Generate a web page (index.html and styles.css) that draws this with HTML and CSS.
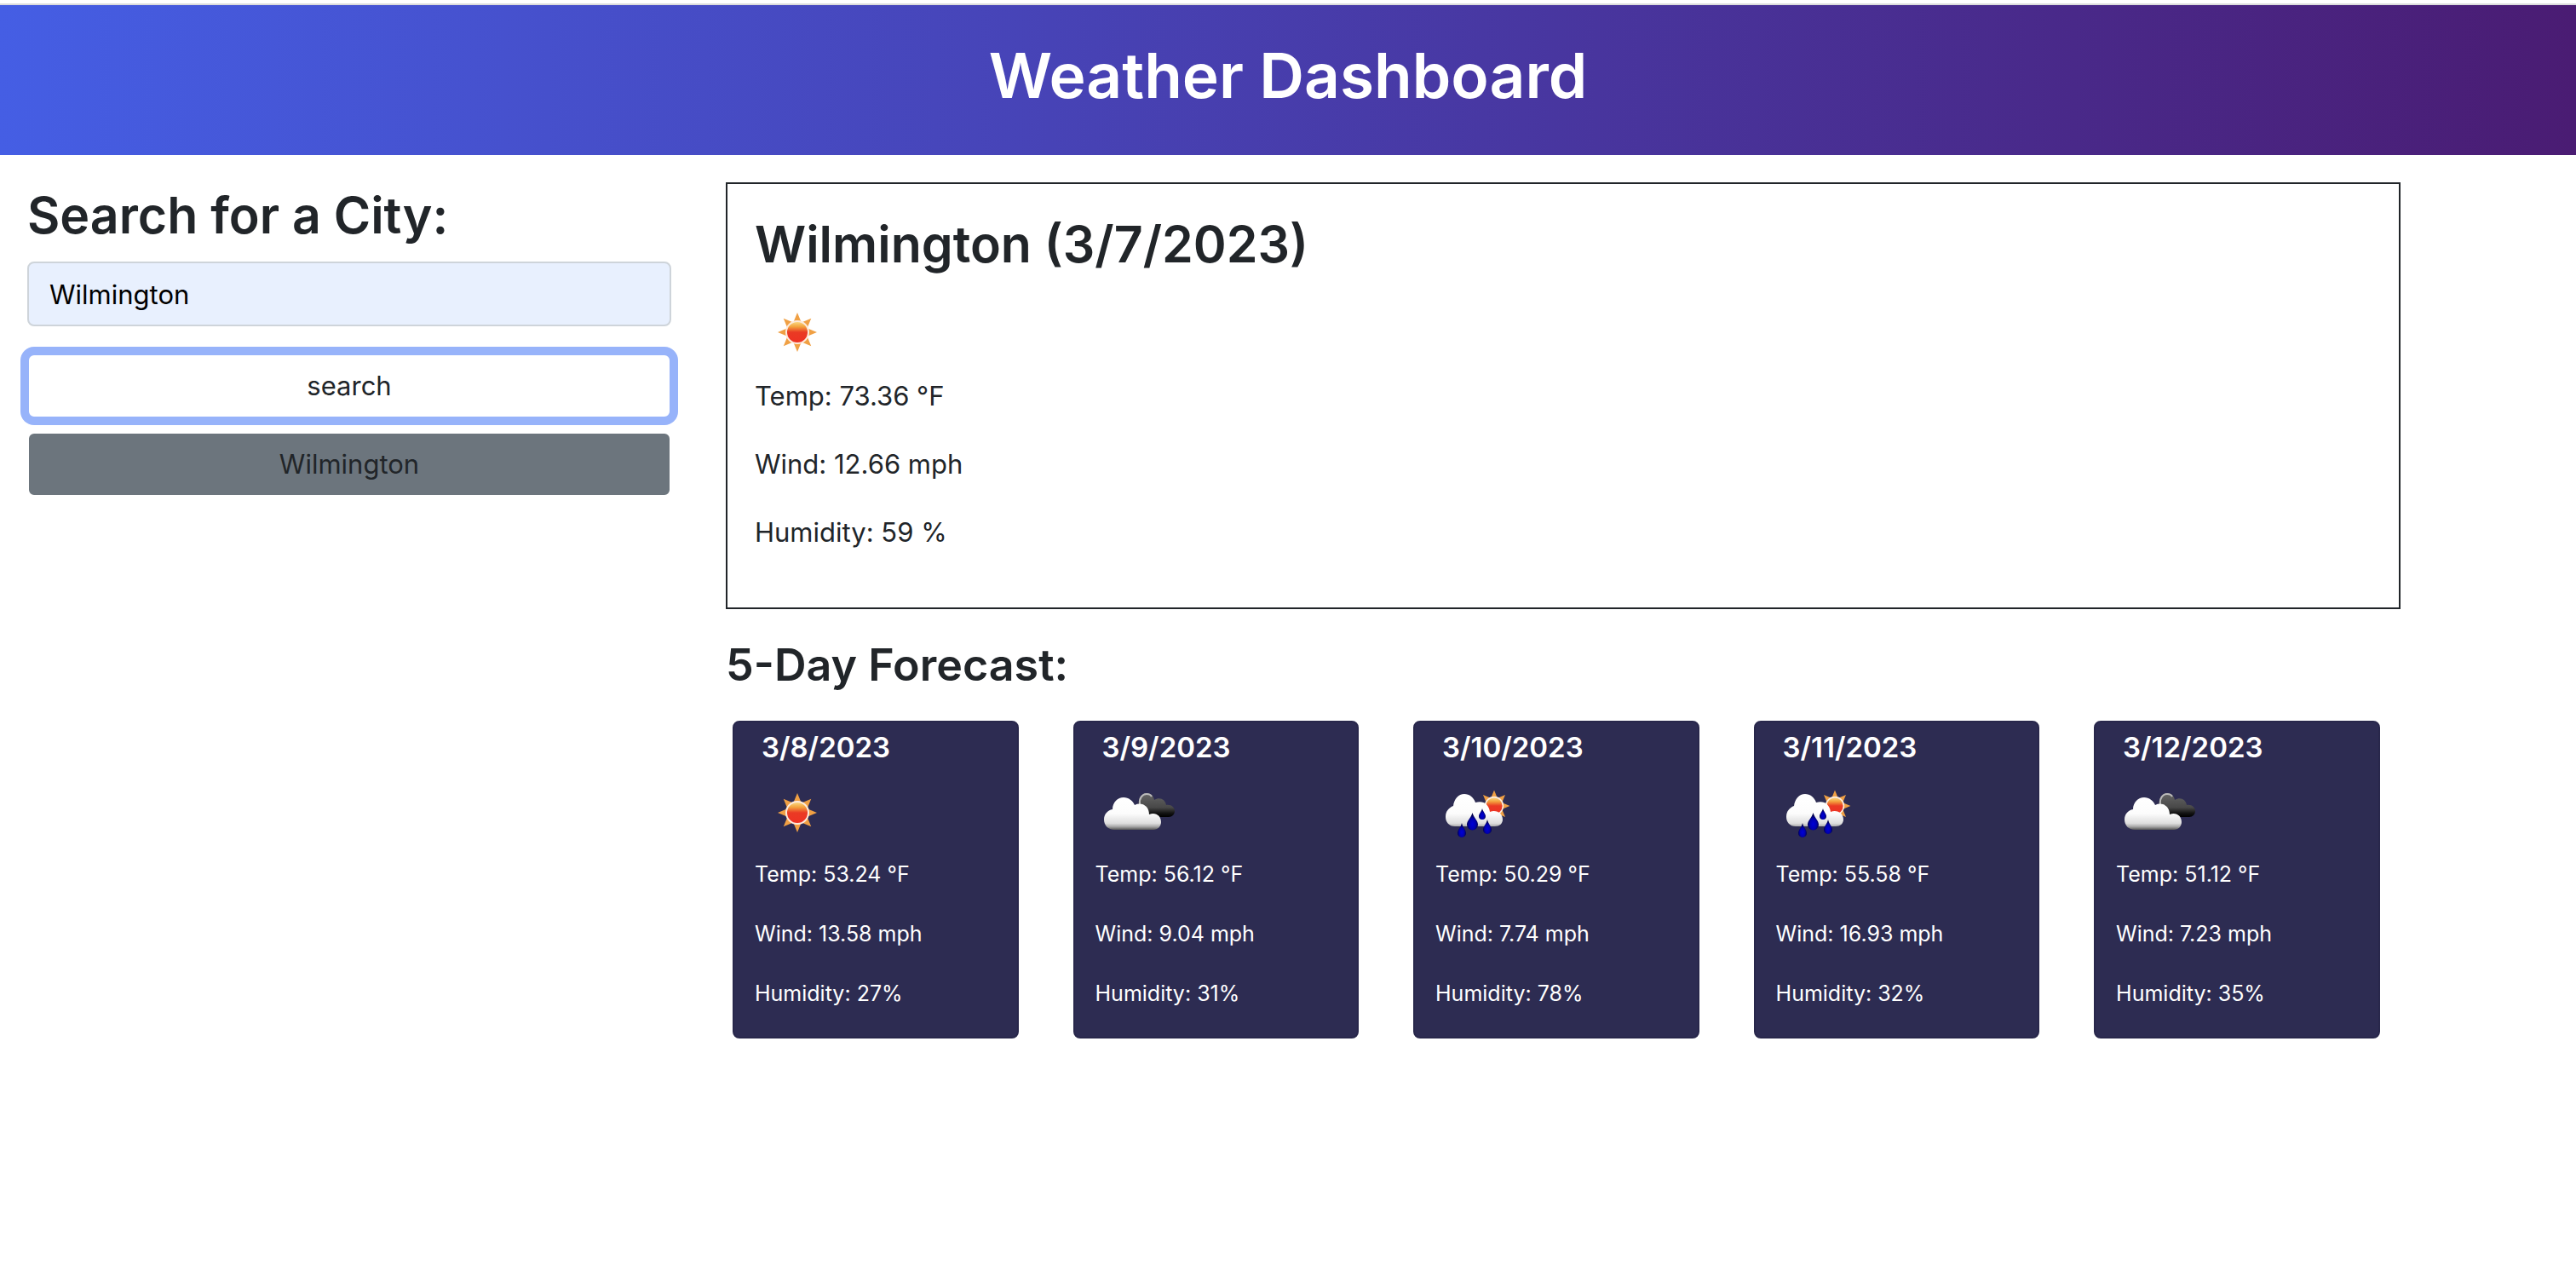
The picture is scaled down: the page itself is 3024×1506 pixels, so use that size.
FILE: index.html
```
<!DOCTYPE html>
<html lang="en">
<head>
<meta charset="utf-8">
<meta name="viewport" content="width=device-width, initial-scale=1">
<title>Weather Dashboard</title>
<link rel="stylesheet" href="styles.css">
</head>
<body>
<svg class="sprite" width="0" height="0" aria-hidden="true">
  <defs>
    <linearGradient id="sun-fill" x1="0" y1="0" x2="0" y2="1">
      <stop offset="0" stop-color="#fbe08a"/>
      <stop offset=".25" stop-color="#f3a23e"/>
      <stop offset=".5" stop-color="#ea3a24"/>
      <stop offset="1" stop-color="#ee3123"/>
    </linearGradient>
    <linearGradient id="cloud-fill" gradientUnits="userSpaceOnUse" x1="0" y1="32" x2="0" y2="70">
      <stop offset="0" stop-color="#fff"/>
      <stop offset=".5" stop-color="#fcfcfc"/>
      <stop offset=".8" stop-color="#dedede"/>
      <stop offset=".9" stop-color="#aaa"/>
      <stop offset="1" stop-color="#555"/>
    </linearGradient>
    <linearGradient id="dark-fill" gradientUnits="userSpaceOnUse" x1="0" y1="27" x2="0" y2="55">
      <stop offset="0" stop-color="#666"/>
      <stop offset=".6" stop-color="#484848"/>
      <stop offset=".85" stop-color="#111"/>
      <stop offset="1" stop-color="#000"/>
    </linearGradient>
    <radialGradient id="drop-fill" cx=".5" cy=".65" r=".5">
      <stop offset="0" stop-color="#0000d8"/>
      <stop offset=".6" stop-color="#0000b0"/>
      <stop offset="1" stop-color="#00004c"/>
    </radialGradient>
    <symbol id="sun" viewBox="0 0 100 100">
      <g fill="#f0a044">
        <path id="ray" d="M50 27 55 39 45 39Z"/>
        <use href="#ray" transform="rotate(45 50 50)"/>
        <use href="#ray" transform="rotate(90 50 50)"/>
        <use href="#ray" transform="rotate(135 50 50)"/>
        <use href="#ray" transform="rotate(180 50 50)"/>
        <use href="#ray" transform="rotate(225 50 50)"/>
        <use href="#ray" transform="rotate(270 50 50)"/>
        <use href="#ray" transform="rotate(315 50 50)"/>
      </g>
      <circle cx="50" cy="50" r="13" fill="url(#sun-fill)" stroke="#fdeadb" stroke-width="2"/>
    </symbol>
    <symbol id="clouds" viewBox="0 0 100 100">
      <path d="M51 45C49 35 53 27 60 27c5 0 8 3 9 8 6-4 13-1 14 6 6-1 10 3 10 7s-3 7-7 7H66Z" fill="url(#dark-fill)"/>
      <path d="M52 40C51 33 55 28 60 28c3 0 5 1 6 3" fill="none" stroke="#bbb" stroke-width="2"/>
      <path d="M22 70c-7 0-12-5-12-12 0-6 4-11 10-12 0-8 6-14 13-14 6 0 11 4 13 9 8-4 17 1 17 11 8-3 14 2 14 9 0 5-4 9-9 9Z" fill="url(#cloud-fill)"/>
    </symbol>
    <symbol id="rain" viewBox="0 0 100 100">
      <use href="#sun" x="29" y="2" width="80" height="80"/>
      <path d="M23 66c-7 0-11-5-11-11 0-7 4-11 9-13 1-8 6-14 13-14 6 0 11 4 13 10 9-3 16 2 17 11 8-3 15 2 15 9 0 5-4 8-9 8Z" fill="url(#cloud-fill)"/>
      <g fill="url(#drop-fill)">
        <path d="M43.500 50C45 56 50 59 50 64a6.500 6.500 0 0 1-13 0C37 59 42 56 43.500 50Z"/>
        <path d="M55 45C56 49 59 51 59 54a4 4 0 0 1-8 0C51 51 54 49 55 45Z"/>
        <path d="M31 62C32 67 36 70 36 74a5 5 0 0 1-10 0C26 70 30 67 31 62Z"/>
        <path d="M61 58C62 63 66 66 66 70a5 5 0 0 1-10 0C56 66 60 63 61 58Z"/>
      </g>
    </symbol>
  </defs>
</svg>

<header class="header">
  <h1 class="header-title">Weather Dashboard</h1>
</header>

<div class="layout">
  <aside class="sidebar">
    <form class="search">
      <h2><label for="city">Search for a City:</label></h2>
      <input class="search-input" id="city" type="text" value="Wilmington">
      <button class="btn btn-search" type="button">search</button>
    </form>
    <button class="btn btn-history" type="button">Wilmington</button>
  </aside>

  <main class="content">
    <section class="current">
      <h2>Wilmington (3/7/2023)</h2>
      <svg class="icon" role="img" aria-label="Clear sky"><use href="#sun"/></svg>
      <p>Temp: 73.36 °F</p>
      <p>Wind: 12.66 mph</p>
      <p>Humidity: 59 %</p>
    </section>

    <h3 class="forecast-title">5-Day Forecast:</h3>
    <section class="forecast">
      <article class="card">
        <h4>3/8/2023</h4>
        <svg class="icon" role="img" aria-label="Clear sky"><use href="#sun"/></svg>
        <p>Temp: 53.24 °F</p>
        <p>Wind: 13.58 mph</p>
        <p>Humidity: 27%</p>
      </article>
      <article class="card">
        <h4>3/9/2023</h4>
        <svg class="icon" role="img" aria-label="Broken clouds"><use href="#clouds"/></svg>
        <p>Temp: 56.12 °F</p>
        <p>Wind: 9.04 mph</p>
        <p>Humidity: 31%</p>
      </article>
      <article class="card">
        <h4>3/10/2023</h4>
        <svg class="icon" role="img" aria-label="Rain"><use href="#rain"/></svg>
        <p>Temp: 50.29 °F</p>
        <p>Wind: 7.74 mph</p>
        <p>Humidity: 78%</p>
      </article>
      <article class="card">
        <h4>3/11/2023</h4>
        <svg class="icon" role="img" aria-label="Rain"><use href="#rain"/></svg>
        <p>Temp: 55.58 °F</p>
        <p>Wind: 16.93 mph</p>
        <p>Humidity: 32%</p>
      </article>
      <article class="card">
        <h4>3/12/2023</h4>
        <svg class="icon" role="img" aria-label="Broken clouds"><use href="#clouds"/></svg>
        <p>Temp: 51.12 °F</p>
        <p>Wind: 7.23 mph</p>
        <p>Humidity: 35%</p>
      </article>
    </section>
  </main>
</div>
</body>
</html>
```
FILE: styles.css
```
*, *::before, *::after { box-sizing: border-box; }

body {
  margin: 0;
  padding-top: 4px;
  background: #fff;
  color: #212529;
  font-family: Inter, "Liberation Sans", sans-serif;
  font-size: 31px;
  line-height: 48px;
}

h1, h2, h3, h4, p { margin: 0; }

h1, h2, h3, h4 { font-weight: 600; }

h2 {
  font-size: 59px;
  line-height: 78px;
}

.sprite { position: absolute; }

.header {
  padding: 32px 32px 42px;
  border-top: 2px solid #dcdcdc;
  background: linear-gradient(90deg, #455ee4, #4a1c73);
  color: #fff;
  text-align: center;
}

.header-title {
  font-size: 73px;
  line-height: 102px;
}

.layout {
  display: flex;
  align-items: flex-start;
  gap: 64px;
  padding: 32px;
}

.sidebar {
  width: 25vw;
  flex: none;
  display: flex;
  flex-direction: column;
  gap: 16px;
}

.search {
  display: flex;
  flex-direction: column;
}

.search-input {
  width: 100%;
  height: 76px;
  margin: 15px 0 32px;
  padding: 12px 24px;
  border: 2px solid #ced4da;
  border-radius: 8px;
  background: #e8f0fe;
  color: #000;
  font: inherit;
}

.btn {
  width: 100%;
  height: 76px;
  padding: 12px 24px;
  border: 2px solid #fff;
  border-radius: 8px;
  color: #212529;
  font: inherit;
  text-align: center;
}

.btn-search {
  border-color: #97b3fa;
  background: #fff;
  box-shadow: 0 0 0 8px #97b3fa;
}

.btn-history { background: #6c757d; }

.content {
  width: 65vw;
  flex: none;
}

.current {
  padding: 32px 32px 48px;
  border: 2px solid #212529;
}

.current h2 { margin-bottom: 14px; }

.current p { padding-bottom: 32px; }

.current p:last-child { padding-bottom: 16px; }

.icon {
  display: block;
  width: 100px;
  height: 100px;
}

.current .icon { margin-bottom: 1px; }

.forecast-title {
  margin: 32px 0;
  font-size: 52px;
  line-height: 67px;
}

.forecast {
  display: grid;
  grid-template-columns: repeat(5, 1fr);
  gap: 64px;
  padding: 0 24px 0 8px;
}

.card {
  padding: 8px 24px 0;
  border: 2px solid #28274b;
  border-radius: 8px;
  background: #2d2c52;
  color: #fff;
  font-size: 25px;
  line-height: 38px;
}

.card h4 {
  padding: 0 8px 6px;
  font-size: 33px;
  line-height: 42px;
}

.card .icon { margin-bottom: 3px; }

.card p { padding-bottom: 32px; }
```
